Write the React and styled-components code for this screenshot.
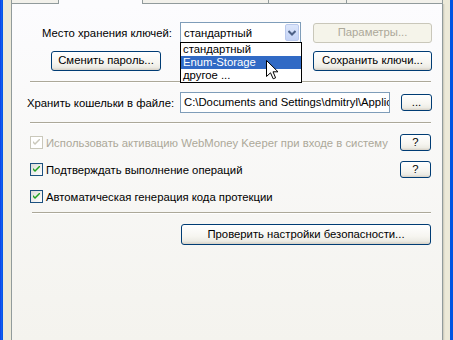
import React from 'react'
import styled, { createGlobalStyle, css } from 'styled-components'

const GlobalStyle = createGlobalStyle`
  html, body { margin: 0; padding: 0; }
  body {
    font-family: "Liberation Sans", Arial, sans-serif;
    font-size: 11.3px;
    color: #000;
    background: #0a46d8;
  }
`

const Window = styled.div`
  width: 453px;
  height: 340px;
  box-sizing: border-box;
  padding: 0 3px;
  background: linear-gradient(90deg, #0831d9 0, #1660f5 1px, #0054e3 3px);
  overflow: hidden;
`

const Frame = styled.div`
  height: 100%;
  display: flex;
  flex-direction: column;
  background: #ece9d8;
  padding: 0 7px 0 8px;
`

const TabRow = styled.div`
  display: flex;
  height: 4px;
  flex: none;
  box-sizing: border-box;
`

const Tab = styled.div`
  box-sizing: border-box;
  width: ${p => (p.$w ? `${p.$w}px` : 'auto')};
  flex: ${p => (p.$w ? 'none' : '1')};
  background: ${p => (p.$active ? '#fcfcfe' : '#f2f1eb')};
  border-right: 1px solid #919b9c;
  border-bottom: ${p => (p.$active ? 'none' : '1px solid #919b9c')};
  &:first-child { border-left: 1px solid #919b9c; }
`

const Panel = styled.div`
  flex: 1;
  display: flex;
  flex-direction: column;
  border-left: 1px solid #919b9c;
  border-right: 1px solid #919b9c;
  box-shadow: 1px 0 0 #d0cebf, 2px 0 0 #e3e0d0;
  background: linear-gradient(180deg, #fcfcfe 0%, #f4f3ee 100%);
`

const Row = styled.div`
  display: flex;
  align-items: center;
  height: ${p => p.$h}px;
  margin-top: ${p => p.$mt}px;
  padding-left: ${p => p.$pl}px;
  padding-right: 10px;
`

const Label = styled.span`
  width: ${p => p.$w}px;
  flex: none;
  white-space: nowrap;
`

const Spacer = styled.div`
  flex: 1;
`

const Button = styled.button`
  font: inherit;
  color: #000;
  height: ${p => p.$h || 20}px;
  width: ${p => p.$w}px;
  flex: none;
  padding: 0;
  border: 1px solid #003c74;
  border-radius: 3px;
  background: linear-gradient(180deg, #ffffff 0%, #f6f5f0 60%, #ecebe4 85%, #d6d0c5 100%);
  box-sizing: border-box;
  white-space: nowrap;
  line-height: 1;
  ${p => p.disabled && css`
    color: #aca899;
    border-color: #c9c7ba;
    background: #f5f4ea;
  `}
`

const SelectWrap = styled.div`
  position: relative;
  width: 121px;
  height: 21px;
  flex: none;
  box-sizing: border-box;
  border: 1px solid #7f9db9;
  background: #fff;
  display: flex;
  align-items: center;
  padding-left: 3px;
`

const SelectText = styled.span`
  flex: 1;
`

const ComboButton = styled.div`
  width: 14px;
  height: 17px;
  margin-right: 1px;
  box-sizing: border-box;
  border: 1px solid #bac9ec;
  border-radius: 2px;
  background: linear-gradient(180deg, #dce6fb 0%, #c4d3f5 100%);
  display: flex;
  align-items: center;
  justify-content: center;
`

const DropList = styled.ul`
  position: absolute;
  left: -1px;
  top: 19px;
  width: 122px;
  margin: 0;
  padding: 0;
  list-style: none;
  box-sizing: border-box;
  border: 1px solid #000;
  background: #fff;
  z-index: 2;
`

const DropItem = styled.li`
  height: 13px;
  line-height: 13px;
  padding-left: 2px;
  white-space: nowrap;
  ${p => p.$sel && css`
    background: #316ac5;
    color: #fff;
  `}
`

const Cursor = styled.svg`
  position: absolute;
  left: 85px;
  top: 17px;
`

const Separator = styled.div`
  margin: ${p => p.$mt}px 11px 0 ${p => p.$ml}px;
  height: 0;
  border-top: 1px solid #aca899;
  border-bottom: 1px solid #fff;
`

const TextField = styled.div`
  width: 210px;
  height: 21px;
  flex: none;
  box-sizing: border-box;
  border: 1px solid #7f9db9;
  background: #fff;
  padding-left: 3px;
  line-height: 19px;
  white-space: nowrap;
  overflow: hidden;
  text-overflow: clip;
`

const Checks = styled.div`
  display: flex;
  flex-direction: column;
  gap: 10px;
  margin-top: 10px;
`

const CheckRow = styled.div`
  display: flex;
  align-items: center;
  height: 17px;
  padding-left: 18px;
  padding-right: 11px;
  color: ${p => (p.$disabled ? '#aca899' : '#000')};
`

const Box = styled.span`
  width: 13px;
  height: 13px;
  flex: none;
  box-sizing: border-box;
  border: 1px solid ${p => (p.$disabled ? '#cac8bb' : '#1c5180')};
  background: ${p => (p.$disabled ? '#fff' : 'linear-gradient(135deg, #dcdcd7 0%, #ffffff 100%)')};
  display: flex;
  align-items: center;
  justify-content: center;
  margin-right: 3px;
`

const BottomRow = styled.div`
  display: flex;
  justify-content: flex-end;
  margin-top: 10px;
  padding-right: 11px;
`

const Check = ({ color }) => (
  <svg width="7" height="7" viewBox="0 0 7 7">
    <path d="M0 2 L0 4 L2 6 L7 1 L7 -1 L2 4 Z" fill={color} />
  </svg>
)

const CheckItem = ({ text, disabled, help }) => (
  <CheckRow $disabled={disabled}>
    <Box $disabled={disabled}>
      <Check color={disabled ? '#cac8bb' : '#21a121'} />
    </Box>
    <span>{text}</span>
    <Spacer />
    {help && <Button $w={31} $h={17}>?</Button>}
  </CheckRow>
)

const App = () => {
  return (
    <>
      <GlobalStyle />
      <Window>
        <Frame>
          <TabRow>
            <Tab $w={48} />
            <Tab $w={84} $active />
            <Tab $w={126} />
            <Tab $w={78} />
            <Tab />
          </TabRow>
          <Panel>
            <Row $h={21} $mt={18} $pl={30}>
              <Label $w={138}>Место хранения ключей:</Label>
              <SelectWrap>
                <SelectText>стандартный</SelectText>
                <ComboButton>
                  <svg width="8" height="6" viewBox="0 0 8 6">
                    <path d="M0.5 1 L4 4.5 L7.5 1" fill="none" stroke="#4d6185" strokeWidth="2" />
                  </svg>
                </ComboButton>
                <DropList>
                  <DropItem>стандартный</DropItem>
                  <DropItem $sel>Enum-Storage</DropItem>
                  <DropItem>другое ...</DropItem>
                  <Cursor width="13" height="20" viewBox="0 0 13 20">
                    <path
                      d="M0.5 0.5 L0.5 16.5 L4.5 12.8 L7.2 18.8 L9.6 17.8 L7 11.8 L12 11.8 Z"
                      fill="#fff"
                      stroke="#000"
                      strokeWidth="1"
                    />
                  </Cursor>
                </DropList>
              </SelectWrap>
              <Spacer />
              <Button $w={119} disabled>Параметры...</Button>
            </Row>
            <Row $h={20} $mt={8} $pl={39}>
              <Button $w={110}>Сменить пароль...</Button>
              <Spacer />
              <Button $w={119}>Сохранить ключи...</Button>
            </Row>
            <Separator $mt={10} $ml={18} />
            <Row $h={21} $mt={9} $pl={15}>
              <Label $w={153}>Хранить кошельки в файле:</Label>
              <TextField>C:\Documents and Settings\dmitryl\Applica</TextField>
              <Spacer />
              <Button $w={31} $h={17}>...</Button>
            </Row>
            <Separator $mt={9} $ml={18} />
            <Checks>
              <CheckItem disabled help text="Использовать активацию WebMoney Keeper при входе в систему" />
              <CheckItem help text="Подтверждать выполнение операций" />
              <CheckItem text="Автоматическая генерация кода протекции" />
            </Checks>
            <Separator $mt={7} $ml={20} />
            <BottomRow>
              <Button $w={250} $h={21}>Проверить настройки безопасности...</Button>
            </BottomRow>
          </Panel>
        </Frame>
      </Window>
    </>
  )
}

export default App
